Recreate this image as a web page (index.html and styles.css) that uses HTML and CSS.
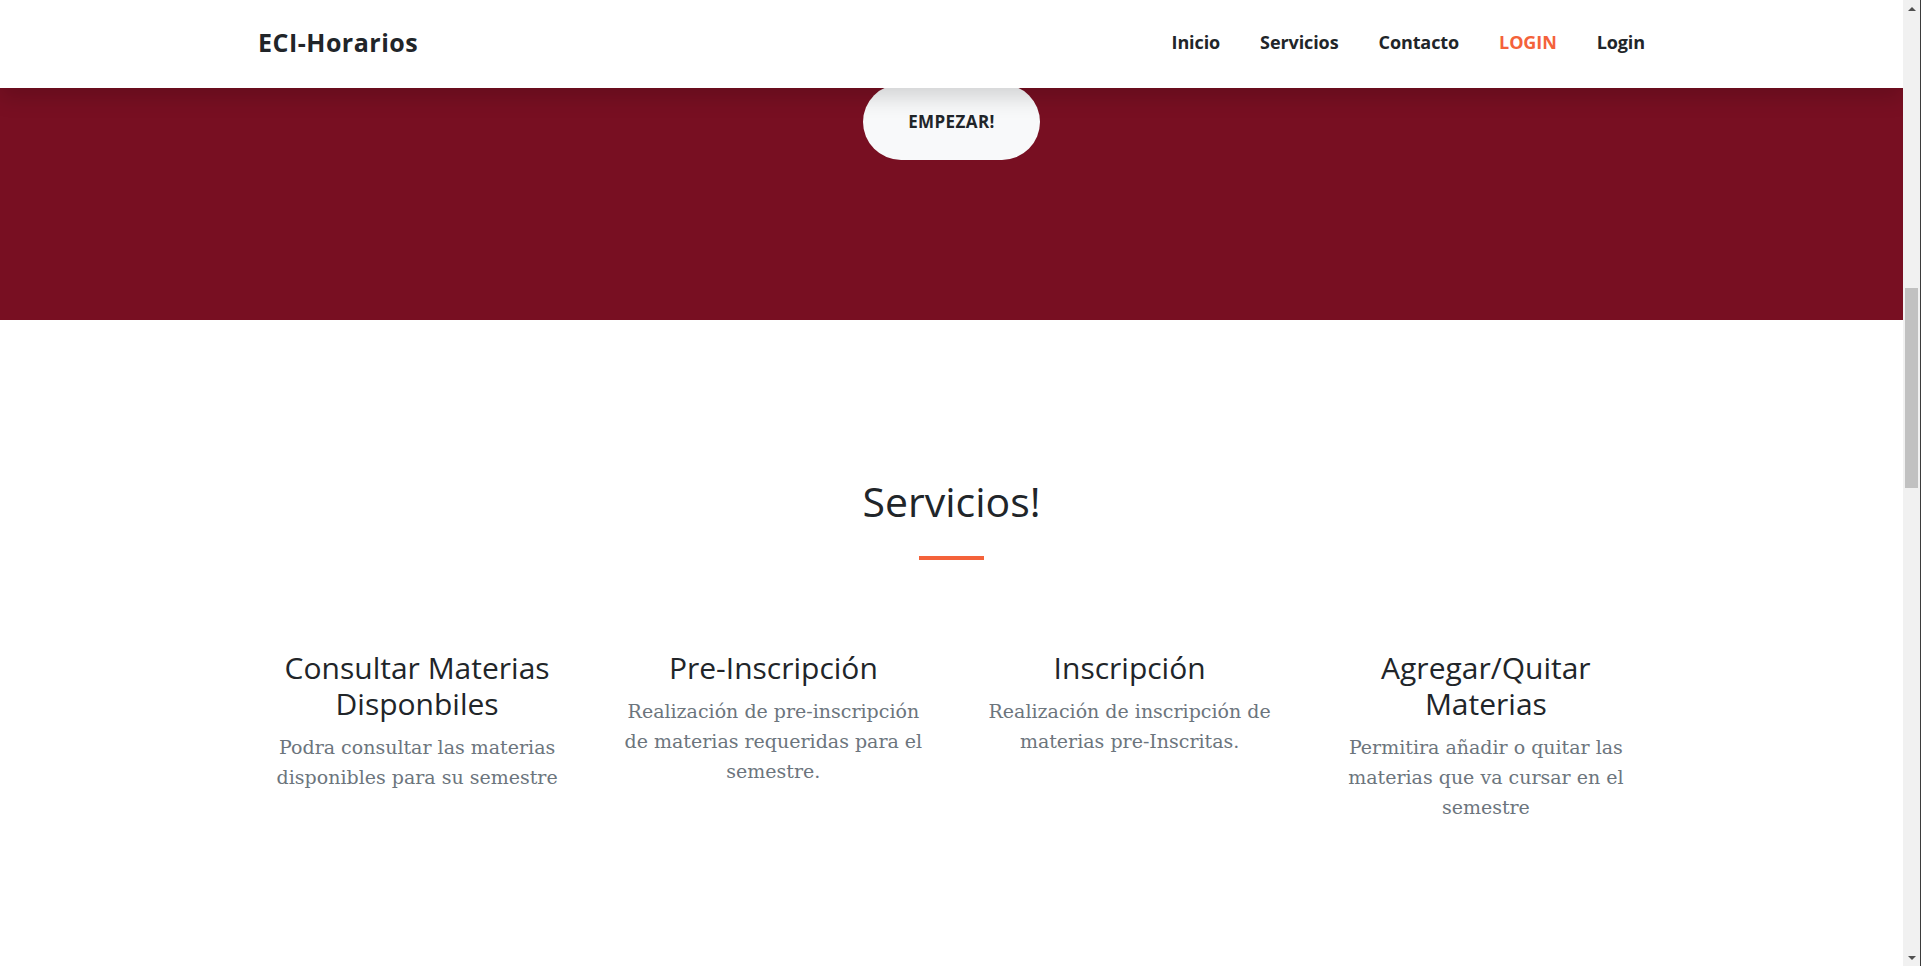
FILE: index.html
```html
<!DOCTYPE html>
<html lang="es">
<head>
<meta charset="utf-8">
<title>ECI-Horarios</title>
<link rel="stylesheet" href="styles.css">
</head>
<body>
<div class="window">
  <div class="page">
    <header class="navbar">
      <div class="container nav-inner">
        <a class="brand" href="#">ECI-Horarios</a>
        <nav class="nav-links">
          <a class="nav-link" href="#">Inicio</a>
          <a class="nav-link" href="#">Servicios</a>
          <a class="nav-link" href="#">Contacto</a>
          <a class="nav-link active" href="#">LOGIN</a>
          <a class="nav-link" href="#">Login</a>
        </nav>
      </div>
    </header>
    <section class="masthead">
      <a class="btn-light" href="#">Empezar!</a>
    </section>
    <section class="services">
      <h2 class="section-title">Servicios!</h2>
      <hr class="divider">
      <div class="container services-row">
        <div class="service">
          <h3 class="service-title">Consultar Materias Disponbiles</h3>
          <p class="service-text">Podra consultar las materias disponibles para su semestre</p>
        </div>
        <div class="service">
          <h3 class="service-title">Pre-Inscripción</h3>
          <p class="service-text">Realización de pre-inscripción de materias requeridas para el semestre.</p>
        </div>
        <div class="service">
          <h3 class="service-title">Inscripción</h3>
          <p class="service-text">Realización de inscripción de materias pre-Inscritas.</p>
        </div>
        <div class="service">
          <h3 class="service-title">Agregar/Quitar Materias</h3>
          <p class="service-text">Permitira añadir o quitar las materias que va cursar en el semestre</p>
        </div>
      </div>
    </section>
  </div>
  <div class="scrollbar">
    <div class="arrow arrow-up"></div>
    <div class="track"><div class="thumb"></div></div>
    <div class="arrow arrow-down"></div>
  </div>
</div>
</body>
</html>
```

FILE: styles.css
```css
* { box-sizing: border-box; }
html, body { margin: 0; padding: 0; }
body {
  overflow: hidden;
  background: #fff;
  font-family: "DejaVu Serif", serif;
  color: #212529;
}
.window {
  display: flex;
  height: 966px;
  width: 1921px;
}
.page {
  flex: 1;
  display: flex;
  flex-direction: column;
  overflow: hidden;
  background: #fff;
}
.container {
  width: 1425px;
  margin: 0 auto;
  padding: 0 19px;
}

/* navbar */
.navbar {
  height: 88px;
  flex: none;
  background: #fff;
  box-shadow: 0 10px 20px rgba(0, 0, 0, 0.15);
  position: relative;
  z-index: 2;
}
.nav-inner {
  height: 100%;
  display: flex;
  align-items: center;
  justify-content: space-between;
  padding-bottom: 5px;
}
.brand {
  font-family: "Open Sans", sans-serif;
  font-weight: 700;
  font-size: 25px;
  color: #212529;
  text-decoration: none;
  letter-spacing: 0.5px;
}
.nav-links {
  display: flex;
  align-items: center;
  margin-right: -20px;
}
.nav-link {
  font-family: "Open Sans", sans-serif;
  font-weight: 700;
  font-size: 18px;
  letter-spacing: -0.1px;
  color: #212529;
  text-decoration: none;
  padding: 0 20px;
}
.nav-link.active { color: #f4623a; }

/* masthead */
.masthead {
  flex: none;
  height: 232px;
  background: #780f22;
  display: flex;
  justify-content: center;
  align-items: flex-start;
  position: relative;
  z-index: 1;
}
.btn-light {
  margin-top: -4px;
  display: inline-block;
  background: #f8f9fa;
  color: #212529;
  font-family: "Open Sans", sans-serif;
  font-weight: 700;
  font-size: 17px;
  line-height: 26px;
  letter-spacing: 0.4px;
  text-transform: uppercase;
  text-decoration: none;
  padding: 25px 45px;
  border-radius: 200px;
}

/* services */
.services {
  flex: none;
  padding-top: 158px;
}
.section-title {
  margin: 0;
  text-align: center;
  font-family: "Open Sans", sans-serif;
  font-weight: 400;
  font-size: 41px;
  line-height: 46px;
  padding-bottom: 2px;
  color: #212529;
}
.divider {
  width: 65px;
  height: 4px;
  margin: 30px auto;
  border: 0;
  background: #f4623a;
}
.services-row {
  display: grid;
  grid-template-columns: repeat(4, 1fr);
  column-gap: 38px;
}
.service {
  margin-top: 60px;
  text-align: center;
}
.service-title {
  margin: 0 0 10px;
  font-family: "Open Sans", sans-serif;
  font-weight: 400;
  font-size: 30px;
  line-height: 36px;
  color: #212529;
}
.service-text {
  margin: 0;
  font-family: "DejaVu Serif", serif;
  font-size: 19px;
  line-height: 30px;
  color: #6c757d;
}

/* scrollbar */
.scrollbar {
  flex: none;
  width: 18px;
  background: #f1f1f1;
  border-right: 1px solid #3b3b3b;
  display: flex;
  flex-direction: column;
}
.arrow {
  height: 17px;
  display: flex;
  justify-content: center;
  align-items: center;
}
.arrow-up::before {
  content: "";
  border-left: 4px solid transparent;
  border-right: 4px solid transparent;
  border-bottom: 4px solid #505050;
}
.arrow-down::before {
  content: "";
  border-left: 4px solid transparent;
  border-right: 4px solid transparent;
  border-top: 4px solid #505050;
}
.track {
  flex: 1;
  padding-top: 271px;
  display: flex;
  justify-content: center;
}
.thumb {
  width: 13px;
  height: 200px;
  background: #c1c1c1;
}
```
